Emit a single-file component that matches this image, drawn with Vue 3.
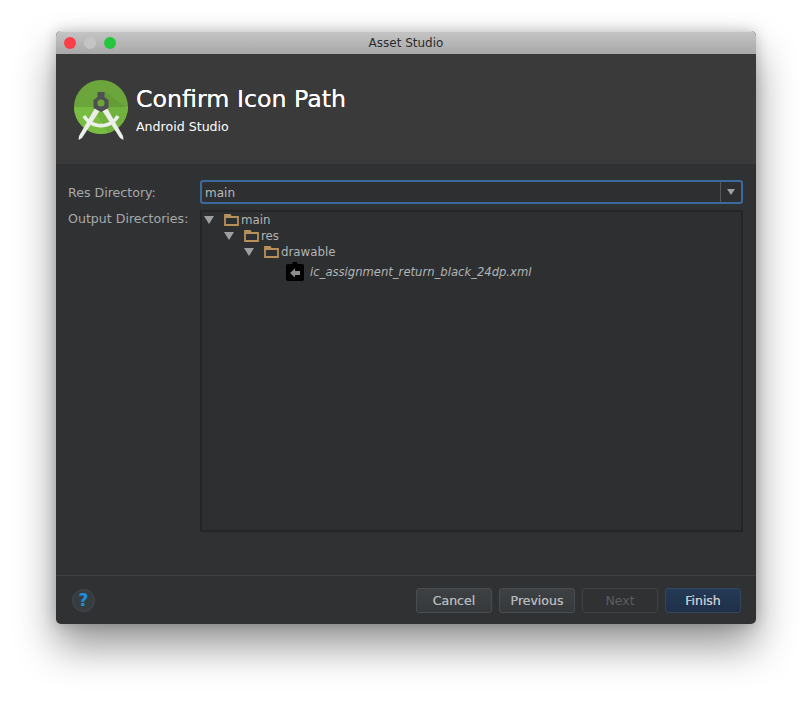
<template>
  <div class="page">
    <div class="window">
      <!-- title bar -->
      <div class="titlebar">
        <div class="lights">
          <span class="light red"></span>
          <span class="light grey"></span>
          <span class="light green"></span>
        </div>
        <span class="title">Asset Studio</span>
      </div>

      <!-- banner -->
      <div class="banner">
        <svg class="logo" width="62" height="64" viewBox="0 0 62 64">
          <circle cx="29" cy="29" r="27" fill="#6ba53c" />
          <path d="M2 29a27 27 0 0 0 54 0z" fill="#78bc42" />
          <path d="M33 13l23 18a27 27 0 0 1-20 24l-12-20z" fill="#000" opacity="0.05" />
          <path d="M13.500 37a18 18 0 0 0 31 0l3 2a21.500 21.500 0 0 1-37 0z" fill="#eceeea" />
          <path d="M23 30l4.500 3L10 60l-3.500 2 .5-4z" fill="#eceeea" />
          <path d="M35 30l-4.500 3L48 60l3.500 2-.5-4z" fill="#eceeea" />
          <path d="M25.500 14h7v5l4 3v8L29 34l-7.500-4v-8l4-3z" fill="#4d4f50" />
          <circle cx="29" cy="25" r="3.600" fill="#6ba53c" />
        </svg>
        <div class="banner-text">
          <div class="heading">Confirm Icon Path</div>
          <div class="sub">Android Studio</div>
        </div>
      </div>

      <!-- form -->
      <div class="content">
        <div class="row">
          <label class="label">Res Directory:</label>
          <div class="combo">
            <span class="combo-value">main</span>
            <span class="combo-btn"><i class="arrow small"></i></span>
          </div>
        </div>
        <div class="row grow">
          <label class="label output">Output Directories:</label>
          <div class="tree">
            <div
              v-for="node in nodes"
              :key="node.name"
              class="node"
              :style="{ paddingLeft: node.indent + 'px' }"
            >
              <i class="arrow tree-arrow"></i>
              <svg class="folder" width="15" height="12" viewBox="0 0 15 12">
                <path d="M1 11V1h5l1 2h7v8z" fill="none" stroke="#b8915a" stroke-width="1.800" />
                <path d="M1 3h13" stroke="#b8915a" stroke-width="1.800" />
              </svg>
              <span>{{ node.name }}</span>
            </div>
            <div class="node file">
              <svg class="file-icon" width="18" height="19" viewBox="0 0 18 19">
                <path d="M2 2h4.500a2.500 2.500 0 0 1 5 0H16a2 2 0 0 1 2 2v13a2 2 0 0 1-2 2H2a2 2 0 0 1-2-2V4a2 2 0 0 1 2-2z" fill="#000" />
                <path d="M4 11l5-4.500V9h5v4H9v2.500z" fill="#8c8c8c" />
              </svg>
              <em>ic_assignment_return_black_24dp.xml</em>
            </div>
          </div>
        </div>
      </div>

      <!-- footer -->
      <div class="footer">
        <button class="help">?</button>
        <div class="buttons">
          <button class="btn">Cancel</button>
          <button class="btn">Previous</button>
          <button class="btn disabled">Next</button>
          <button class="btn primary">Finish</button>
        </div>
      </div>
    </div>
  </div>
</template>

<script setup>
const nodes = [
  { name: "main", indent: 2 },
  { name: "res", indent: 22 },
  { name: "drawable", indent: 42 },
];
</script>

<style>
html,
body {
  margin: 0;
  background: #fff;
}
</style>

<style scoped>
.page {
  width: 812px;
  height: 704px;
  padding: 31px 0 0 56px;
  box-sizing: border-box;
  overflow: hidden;
  font-family: "DejaVu Sans", sans-serif;
}

.window {
  width: 700px;
  height: 593px;
  display: flex;
  flex-direction: column;
  border-radius: 5px;
  overflow: hidden;
  background: #303133;
  box-shadow: 0 22px 40px rgba(0, 0, 0, 0.42), 0 0 14px rgba(0, 0, 0, 0.2);
}

/* title bar */
.titlebar {
  height: 23px;
  flex: none;
  position: relative;
  display: flex;
  align-items: center;
  justify-content: center;
  background: linear-gradient(#c4c4c4, #a8a8a8);
  border-top: 1px solid #d8d8d8;
  box-sizing: border-box;
}

.lights {
  position: absolute;
  left: 8px;
  top: 5px;
  display: flex;
  gap: 8px;
}

.light {
  width: 12px;
  height: 12px;
  border-radius: 50%;
}

.red {
  background: #fb3f48;
}

.grey {
  background: #c4c4c4;
}

.green {
  background: #25c53c;
}

.title {
  font-size: 12px;
  color: #2b2b2b;
}

/* banner */
.banner {
  height: 110px;
  flex: none;
  display: flex;
  align-items: flex-start;
  box-sizing: border-box;
  padding: 24px 0 0 16px;
  background: #3a3a3b;
}

.logo {
  flex: none;
}

.banner-text {
  margin-left: 2px;
  padding-top: 6px;
  color: #fff;
}

.heading {
  font-size: 23.700px;
  line-height: 30px;
  text-shadow: 0 0 0.500px #fff;
}

.sub {
  font-size: 12.600px;
  line-height: 16px;
  margin-top: 5px;
}

/* form */
.content {
  flex: 1;
  display: flex;
  flex-direction: column;
  padding: 16px 13px 43px 12px;
  color: #a7a9ab;
  font-size: 12.600px;
}

.row {
  display: flex;
}

.grow {
  flex: 1;
  margin-top: 4px;
}

.label {
  width: 132px;
  flex: none;
  line-height: 26px;
}

.output {
  line-height: 17px;
}

.combo {
  flex: 1;
  height: 24px;
  display: flex;
  box-sizing: border-box;
  border: 2px solid #3d6a9e;
  border-radius: 3px;
  background: #2e2f31;
}

.combo-value {
  flex: 1;
  padding-left: 3px;
  font-size: 12px;
  line-height: 23px;
  color: #b8babb;
}

.combo-btn {
  width: 20px;
  display: flex;
  align-items: center;
  justify-content: center;
  border-left: 1px solid #56585a;
}

.arrow {
  width: 0;
  height: 0;
  border-left: 5px solid transparent;
  border-right: 5px solid transparent;
  border-top: 8px solid #a0a0a0;
}

.small {
  border-left-width: 4px;
  border-right-width: 4px;
  border-top-width: 6px;
}

.tree {
  flex: 1;
  border: 2px solid #242527;
  background: #2e2f31;
}

.node {
  height: 16px;
  display: flex;
  align-items: center;
  font-size: 11.800px;
  color: #b2b4b5;
}

.tree-arrow {
  margin-right: 10px;
}

.folder {
  margin-right: 2px;
}

.file {
  height: 19px;
  padding-left: 84px;
  margin-top: 2px;
}

.file-icon {
  margin-right: 6px;
}

.file em {
  font-size: 11.600px;
  color: #b2b4b5;
}

/* footer */
.footer {
  height: 49px;
  flex: none;
  display: flex;
  align-items: center;
  justify-content: space-between;
  box-sizing: border-box;
  padding: 0 15px 0 16px;
  border-top: 1px solid #3f4042;
}

.help {
  width: 23px;
  height: 23px;
  padding: 0;
  border: 1px solid #44484b;
  border-radius: 50%;
  background: #373c40;
  color: #1e8fe0;
  font: bold 17px "DejaVu Sans", sans-serif;
}

.buttons {
  display: flex;
  gap: 7px;
}

.btn {
  width: 76px;
  height: 25px;
  padding: 0;
  border: 1px solid #4a4d4f;
  border-radius: 3px;
  background: linear-gradient(#3d4143, #36393b);
  color: #b4b6b8;
  font: 12.500px "DejaVu Sans", sans-serif;
  text-shadow: 0 0 0.500px #b4b6b8;
}

.disabled {
  background: none;
  border-color: #414345;
  color: #5b5d5f;
  text-shadow: none;
}

.primary {
  background: linear-gradient(#253a57, #1f3048);
  border-color: #35455b;
  color: #c3c8cd;
  text-shadow: 0 0 0.500px #c3c8cd;
}
</style>
